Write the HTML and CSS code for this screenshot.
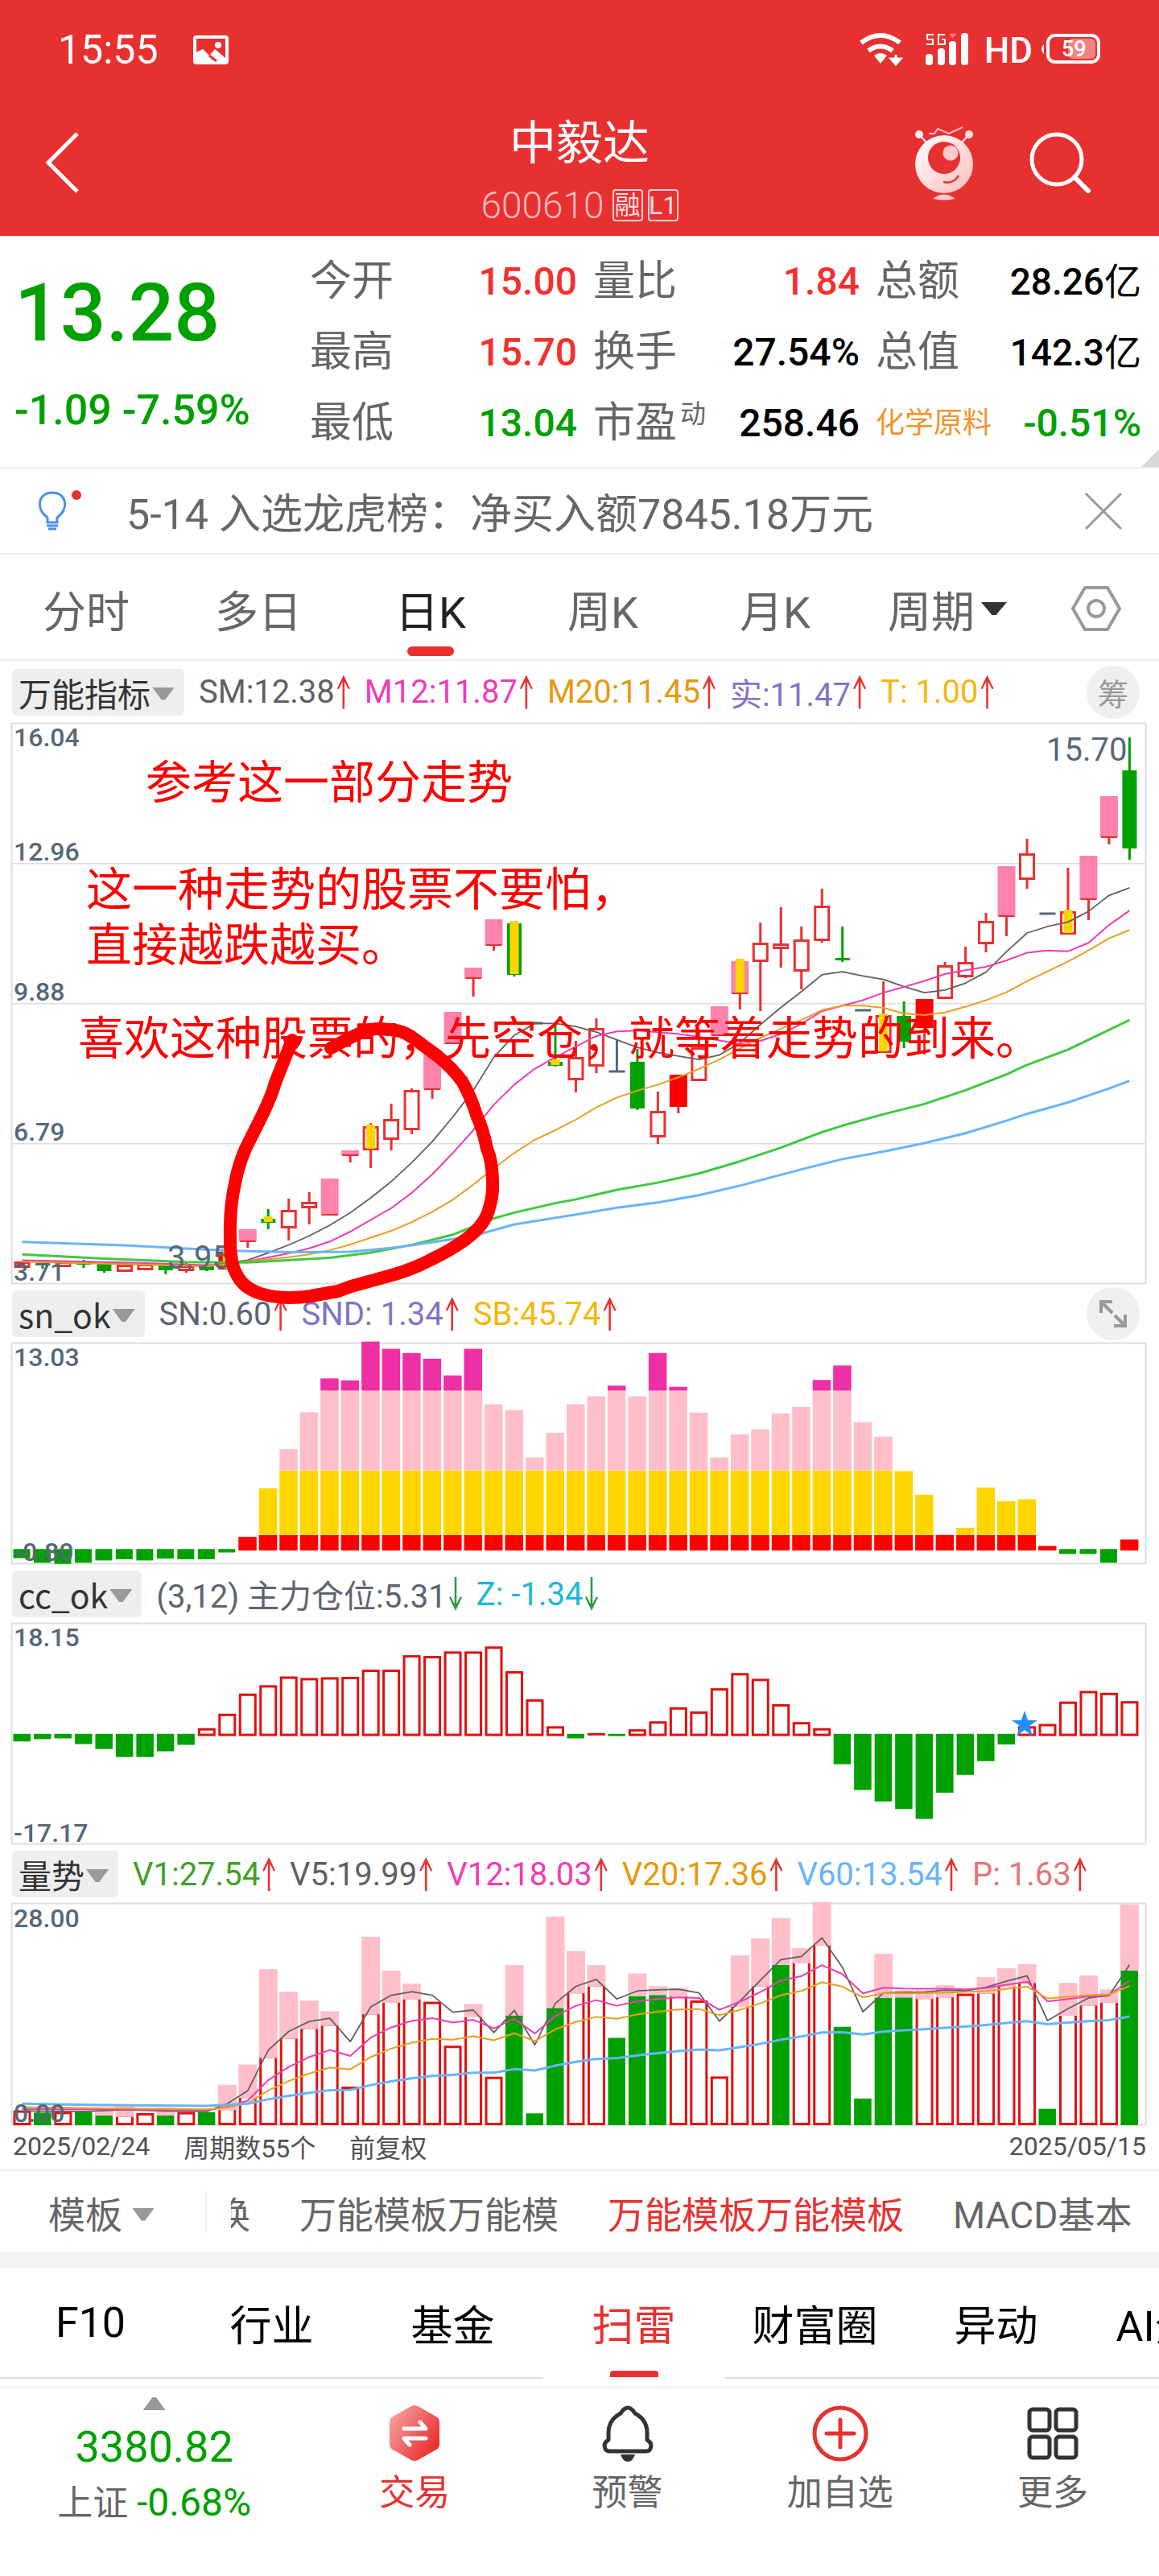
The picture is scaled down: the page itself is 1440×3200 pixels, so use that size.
FILE: index.html
```html
<!DOCTYPE html>
<html lang="zh-CN">
<head>
<meta charset="utf-8">
<meta name="viewport" content="width=device-width, initial-scale=1">
<title>中毅达 600610</title>
<link rel="stylesheet" href="styles.css">
</head>
<body>
<header class="top">
  <div class="status">
    <span class="clock">15:55</span>
    <svg width="44" height="36" viewBox="0 0 44 36" aria-hidden="true"><rect width="44" height="36" rx="4" fill="#fff"/><path d="M4 4h36v24L27 17l-7 8-8-8-8 4z" fill="#e73131"/><circle cx="31" cy="12" r="4" fill="#fff"/><path d="M20 25l9 7" stroke="#e73131" stroke-width="3"/></svg>
    <svg class="status-icons" width="300" height="44" viewBox="0 0 300 44" aria-hidden="true">
      <g fill="none" stroke="#fff" stroke-width="6"><path d="M2 13q24-18 48 0"/><path d="M11 23q15-11 30 0"/></g>
      <path d="M18 29q8-6 16 0l-8 10z" fill="#fff"/><path d="M45 28v8M39 33h12l-6 7z" stroke="#fff" stroke-width="3" fill="#fff"/>
      <g fill="none" stroke="#fff" stroke-width="2"><path d="M92 3h-8v6h7v6h-8M106 3h-8v12h8v-6h-4"/></g>
      <path d="M111 2h9l-4 6z" fill="#f47a7a"/>
      <g fill="#fff"><rect x="82" y="27" width="9" height="14" rx="4"/><rect x="97" y="20" width="9" height="21" rx="4"/><rect x="111" y="11" width="9" height="30" rx="4"/><rect x="126" y="1" width="9" height="40" rx="4"/></g>
      <text x="155" y="38" class="hd">HD</text>
      <rect x="234" y="4" width="63" height="33" rx="9" fill="none" stroke="#fff" stroke-width="4"/>
      <rect x="259" y="8" width="34" height="25" rx="6" fill="#f28484"/>
      <path d="M229 15v12q-6-6 0-12" fill="#fff"/>
      <text x="251" y="30" class="bat">59</text>
    </svg>
  </div>
  <div class="titlebar">
    <button class="icon-btn back" aria-label="返回"><svg width="44" height="78" viewBox="0 0 44 78"><path d="M40 3L4 39l36 36" fill="none" stroke="#fff" stroke-width="5"/></svg></button>
    <div class="title">
      <h1>中毅达</h1>
      <p><span>600610</span><b>融</b><b>L1</b></p>
    </div>
    <div class="actions">
      <button class="icon-btn" aria-label="智能助手"><svg width="76" height="94" viewBox="0 0 76 94">
        <defs><linearGradient id="m" x1="0" y1="0" x2="1" y2="1"><stop offset="0" stop-color="#fff"/><stop offset="1" stop-color="#fbb"/></linearGradient></defs>
        <path d="M7 12l9 10M69 12l-9 10" stroke="#fde" stroke-width="2.5"/><circle cx="7" cy="12" r="5" fill="#fff0f0"/><circle cx="69" cy="12" r="5" fill="#fdd"/>
        <path d="M19 11h7l4-6 14 6 17-8" fill="none" stroke="#fbb" stroke-width="2"/>
        <circle cx="38" cy="49" r="36" fill="url(#m)"/><circle cx="38" cy="41" r="20" fill="#e73131"/><circle cx="46" cy="35" r="9.5" fill="#fcc"/>
        <path d="M37 71q13 3 19-8" fill="none" stroke="#e73131" stroke-width="2.5"/><path d="M24 92q14-11 28 0-14 3-28 0" fill="#fbc4c4"/></svg></button>
      <button class="icon-btn" aria-label="搜索"><svg width="78" height="80" viewBox="0 0 78 80"><circle cx="35" cy="36" r="31" fill="none" stroke="#fff" stroke-width="5"/><path d="M57 58l17 17" stroke="#fff" stroke-width="6" stroke-linecap="round"/></svg></button>
    </div>
  </div>
</header>

<main>
<section class="quote">
  <div class="last"><strong>13.28</strong><span>-1.09 -7.59%</span></div>
  <dl>
    <div><dt>今开</dt><dd class="up">15.00</dd></div>
    <div><dt>量比</dt><dd class="up">1.84</dd></div>
    <div><dt>总额</dt><dd class="sm">28.26<i>亿</i></dd></div>
    <div><dt>最高</dt><dd class="up">15.70</dd></div>
    <div><dt>换手</dt><dd>27.54%</dd></div>
    <div><dt>总值</dt><dd class="sm">142.3<i>亿</i></dd></div>
    <div><dt>最低</dt><dd class="down">13.04</dd></div>
    <div><dt>市盈<sup>动</sup></dt><dd>258.46</dd></div>
    <div><dt class="sector">化学原料</dt><dd class="down">-0.51%</dd></div>
  </dl>
</section>

<section class="news">
  <svg width="60" height="60" viewBox="0 0 60 60" aria-hidden="true"><path d="M14 44v-6C-2 26 3 7 20 7s22 19 6 31v6zM13 48h14M15 52h10" fill="none" stroke="#4a90e8" stroke-width="3"/><circle cx="50" cy="10" r="6" fill="#e73131"/></svg>
  <p>5-14 入选龙虎榜：净买入额7845.18万元</p>
  <button class="icon-btn" aria-label="关闭"><svg width="48" height="48" viewBox="0 0 48 48"><path d="M2 2l44 44M46 2L2 46" stroke="#999" stroke-width="3"/></svg></button>
</section>

<nav class="periods">
  <button>分时</button><button>多日</button><button class="on">日K</button><button>周K</button><button>月K</button>
  <button>周期<i class="tri dark"></i></button>
  <button aria-label="设置"><svg width="64" height="58" viewBox="0 0 64 58"><path d="M18 3h28l15 26-15 26H18L3 29z" fill="none" stroke="#999" stroke-width="4" stroke-linejoin="round"/><circle cx="32" cy="29" r="10" fill="none" stroke="#999" stroke-width="4"/></svg></button>
</nav>

<section class="panel annotated">
  <div class="legend first">
    <button class="pick">万能指标<i class="tri"></i></button>
    <span class="gray">SM:12.38<i class="arr"></i></span><span class="mag">M12:11.87<i class="arr"></i></span><span class="org">M20:11.45<i class="arr"></i></span><span class="pur">实:11.47<i class="arr"></i></span><span class="yel">T: 1.00<i class="arr"></i></span>
    <button class="round">筹</button>
  </div>
  <svg id="kline" class="chart" viewBox="0 0 1440 698" role="img" aria-label="日K线图"></svg>
</section>

<section class="panel">
  <div class="legend">
    <button class="pick">sn_ok<i class="tri"></i></button>
    <span class="slate">SN:0.60<i class="arr"></i></span><span class="pur">SND: 1.34<i class="arr"></i></span><span class="yel">SB:45.74<i class="arr"></i></span>
    <button class="round" aria-label="展开"><svg width="34" height="34" viewBox="0 0 34 34"><path d="M2 16V2h14M3 3l13 13M32 18v14H18M31 31L19 19" fill="none" stroke="#999" stroke-width="4"/></svg></button>
  </div>
  <svg id="sn" class="chart" viewBox="0 0 1440 276" role="img" aria-label="sn_ok"></svg>
</section>

<section class="panel">
  <div class="legend">
    <button class="pick">cc_ok<i class="tri"></i></button>
    <span class="slate">(3,12) 主力仓位:5.31<i class="arr dn"></i></span><span class="cyan">Z: -1.34<i class="arr dn"></i></span>
  </div>
  <svg id="cc" class="chart" viewBox="0 0 1440 276" role="img" aria-label="cc_ok"></svg>
</section>

<section class="panel">
  <div class="legend">
    <button class="pick">量势<i class="tri"></i></button>
    <span class="grn">V1:27.54<i class="arr"></i></span><span class="gray">V5:19.99<i class="arr"></i></span><span class="mag">V12:18.03<i class="arr"></i></span><span class="org">V20:17.36<i class="arr"></i></span><span class="blu">V60:13.54<i class="arr"></i></span><span class="pnk">P: 1.63<i class="arr"></i></span>
  </div>
  <svg id="vol" class="chart" viewBox="0 0 1440 277" role="img" aria-label="量势"></svg>
  <div class="dates"><span>2025/02/24</span><span>周期数55个</span><span>前复权</span><span>2025/05/15</span></div>
</section>

<nav class="templates">
  <button class="tpl">模板<i class="tri"></i></button>
  <div class="strip"><a href="#t1" class="cut"><span>换</span></a><a href="#t2">万能模板万能模</a><a href="#t3" class="on">万能模板万能模板</a><a href="#t4">MACD基本</a></div>
</nav>

<nav class="sections">
  <a href="#f10">F10</a><a href="#hy">行业</a><a href="#jj">基金</a><a href="#sl" class="on">扫雷</a><a href="#cf">财富圈</a><a href="#yd">异动</a><a href="#ai">AI分析</a>
</nav>
</main>

<footer class="bar">
  <button class="index"><i class="tri upw"></i><strong>3380.82</strong><span>上证 <em>-0.68%</em></span></button>
  <button class="red"><svg width="72" height="72" viewBox="0 0 72 72"><defs><linearGradient id="h" x1="0" y1="0.2" x2="1" y2="0.9"><stop offset="0" stop-color="#f6a0a0"/><stop offset="1" stop-color="#e82020"/></linearGradient></defs><path d="M32 2q4-2 8 0l23 13q4 2 4 7v27q0 5-4 7L40 69q-4 2-8 0L9 56q-4-2-4-7V22q0-5 4-7z" fill="url(#h)"/><path d="M23 30h27l-7-8M50 42H23l7 8" fill="none" stroke="#fff" stroke-width="5" stroke-linecap="round" stroke-linejoin="round"/></svg>交易</button>
  <button><svg width="72" height="72" viewBox="0 0 72 72"><path d="M27 11q9-14 18 0 15 8 15 24v9q7 4 4 11-1 3-6 3H14q-5 0-6-3-3-7 4-11v-9q0-16 15-24z" fill="none" stroke="#333" stroke-width="5" stroke-linejoin="round"/><path d="M27 62h18q-3 9-9 9t-9-9" fill="#333"/></svg>预警</button>
  <button><svg width="72" height="72" viewBox="0 0 72 72"><circle cx="36" cy="36" r="32" fill="none" stroke="#e73131" stroke-width="5"/><path d="M36 19v34M19 36h34" stroke="#e73131" stroke-width="5" stroke-linecap="round"/></svg>加自选</button>
  <button><svg width="72" height="72" viewBox="0 0 72 72"><g fill="none" stroke="#333" stroke-width="5"><rect x="7" y="6" width="25" height="26" rx="4"/><rect x="40" y="6" width="25" height="26" rx="4"/><rect x="7" y="40" width="25" height="26" rx="4"/><rect x="40" y="40" width="25" height="26" rx="4"/></g></svg>更多</button>
</footer>
<script src="charts.js"></script>
</body>
</html>
```
FILE: styles.css
```css
* { box-sizing: border-box; }
body {
  margin: 0;
  background: #fff;
  color: #000;
  font-family: Roboto, "Noto Sans CJK SC", sans-serif;
  overflow-x: hidden;
}
button {
  border: 0;
  padding: 0;
  background: none;
  color: inherit;
  font: inherit;
}
a { color: inherit; text-decoration: none; }
svg { display: block; }
h1, p, dl, dd { margin: 0; }

.top { background: #e73131; color: #fff; height: 293px; }
.status { display: flex; align-items: center; height: 124px; padding: 0 72px; }
.clock { font-size: 50px; width: 168px; }
.status-icons { margin-left: auto; }
.hd { font: 500 44px "Liberation Sans Narrow", Roboto, sans-serif; fill: #fff; }
.bat { font: 500 27px Roboto, sans-serif; fill: #fff; }
.titlebar { display: grid; grid-template-columns: 1fr auto 1fr; height: 169px; padding: 0 56px; }
.back { justify-self: start; height: 156px; }
.title { text-align: center; }
.title h1 { font-size: 58px; font-weight: 400; line-height: 88px; padding-top: 10px; }
.title p { display: flex; gap: 6px; justify-content: center; align-items: center; height: 72px; padding-bottom: 6px; }
.title p span { font-size: 46px; font-weight: 300; color: #fbb; margin-right: 4px; }
.title b { border: 2px solid #fcc; border-radius: 4px; width: 38px; height: 40px; font-size: 32px; font-weight: 400; line-height: 36px; display: flex; justify-content: center; color: #fdd; }
.actions { justify-self: end; display: flex; gap: 67px; align-items: center; height: 156px; padding-right: 28px; }
.title, .actions, .back { align-self: start; }

.quote { position: relative; display: grid; grid-template-columns: 385fr 1055fr; padding: 13px 0 10px; border-bottom: 2px solid #eee; }
.quote::after { content: ""; position: absolute; right: 0; bottom: 0; width: 22px; height: 22px; background: #d8d8d8; clip-path: polygon(100% 0, 100% 100%, 0 100%); }
.last { padding-left: 18px; color: #00a000; display: flex; flex-direction: column; font-weight: 500; }
.last strong { font-size: 100px; font-weight: 500; line-height: 166px; }
.last span { font-size: 52px; line-height: 76px; white-space: nowrap; }
.quote dl { display: grid; grid-template-columns: 332fr 331fr 330fr; column-gap: 20px; padding-right: 22px; }
.quote dl div { display: flex; justify-content: space-between; align-items: center; height: 88px; white-space: nowrap; }
.quote dt { font-size: 52px; color: #666; line-height: 88px; }
.quote dt sup { font-size: 32px; line-height: 32px; margin-left: 4px; }
.quote dt.sector { font-size: 36px; color: #f5912c; }
.quote dd { font-size: 48px; font-weight: 500; line-height: 88px; }
.quote dd.sm { font-size: 46px; }
.quote dd i { font-style: normal; font-weight: 400; }
.up { color: #f33030; }
.down { color: #00a000; }

.news { display: flex; align-items: center; height: 107px; padding: 0 45px; border-bottom: 2px solid #eee; color: #666; }
.news p { font-size: 52px; margin-left: 52px; flex: 1; white-space: nowrap; }

.periods { display: grid; grid-template-columns: repeat(6, 214fr) 156fr; height: 132px; border-bottom: 2px solid #eee; font-size: 54px; color: #666; }
.periods button { position: relative; display: flex; align-items: center; justify-content: center; white-space: nowrap; padding-top: 4px; }
.periods .on { color: #222; }
.periods .on::after { content: ""; position: absolute; bottom: 4px; width: 58px; height: 12px; border-radius: 6px; background: #e73131; }

.tri { flex: none; width: 28px; height: 16px; margin-left: 2px; background: #999; clip-path: polygon(0 0, 100% 0, 58% 100%, 42% 100%); }
.tri.dark { width: 32px; background: #333; margin-left: 8px; }
.tri.upw { clip-path: polygon(42% 0, 58% 0, 100% 100%, 0 100%); margin: 0; }

.legend { display: flex; align-items: center; height: 72px; padding: 0 24px 0 15px; font-size: 40px; white-space: nowrap; gap: 18px; position: relative; }
.legend.first { height: 77px; }
.pick { display: flex; align-items: center; height: 58px; padding: 0 12px 0 8px; background: #eee; border-radius: 6px; color: #333; font-size: 41px; line-height: 54px; font-family: "Noto Sans CJK SC", sans-serif; }
.pick .tri { margin-top: 4px; }
.legend > span { display: flex; align-items: center; }
.arr { width: 16px; height: 42px; margin-left: 3px; background: #e73131; clip-path: polygon(50% 0, 100% 40%, 88% 42%, 58% 20%, 58% 100%, 42% 100%, 42% 20%, 12% 42%, 0 40%); }
.arr.dn { background: #2a9a40; transform: rotate(180deg); }
.round { margin-left: auto; width: 66px; height: 66px; border-radius: 33px; background: #efefef; color: #999; font-size: 38px; display: flex; align-items: center; justify-content: center; }
.gray { color: #606060; } .slate { color: #5c6470; } .mag { color: #f03cb4; } .org { color: #e8990c; }
.pur { color: #7f74c8; } .yel { color: #f4b80c; } .cyan { color: #1cb8d8; } .grn { color: #40a028; }
.blu { color: #68b4fc; } .pnk { color: #e07878; }

.chart { width: 100%; height: auto; overflow: visible; }
.annotated .chart { position: relative; z-index: 1; pointer-events: none; }
.tick { font: 500 32px Roboto, sans-serif; fill: #54687a; }
.mark { font: 40px Roboto, sans-serif; fill: #54687a; }
.note { font: 57px "Noto Sans CJK SC", sans-serif; fill: #f00; }
.dates { display: flex; align-items: center; gap: 42px; height: 54px; padding: 0 16px 4px; font-size: 32px; color: #505050; }
.dates span:last-child { margin-left: auto; }

.templates { display: flex; align-items: center; height: 123px; border-top: 2px solid #eee; border-bottom: 20px solid #f3f3f3; color: #666; font-size: 46px; white-space: nowrap; }
.tpl { display: flex; align-items: center; width: 257px; height: 52px; padding-left: 60px; border-right: 2px solid #eee; }
.tpl .tri { margin: 6px 0 0 12px; }
.strip { display: flex; gap: 61px; flex: 1; overflow: hidden; padding-left: 30px; }
.cut { width: 24px; overflow: hidden; display: flex; justify-content: flex-end; }
.templates .on { color: #e73131; }

.sections { display: grid; grid-template-columns: repeat(7, 15.625%); height: 137px; overflow: hidden; font-size: 52px; }
.sections a { display: flex; align-items: center; justify-content: center; border-bottom: 2px solid #ddd; position: relative; white-space: nowrap; }
.sections .on { color: #e73131; border-color: #fff; }
.sections .on::after { content: ""; position: absolute; bottom: 0; width: 60px; height: 8px; border-radius: 4px 4px 0 0; background: #e73131; }

.bar { display: grid; grid-template-columns: 383fr repeat(4, 264fr); border-top: 3px solid #f3f3f3; margin-top: 9px; padding: 11px 0 70px; }
.bar button { display: flex; flex-direction: column; align-items: center; padding-top: 9px; font-size: 44px; line-height: 76px; color: #666; }
.bar .red { color: #e73131; }
.bar .index { padding: 0; }
.index strong { font-size: 54px; font-weight: 400; color: #00a000; line-height: 92px; }
.index span { line-height: 46px; white-space: nowrap; }
.index em { font-style: normal; color: #00a000; font-size: 48px; }
```
FILE: charts.js
```js
const FIRST_X = 27.5, STEP = 25.48, LEFT = 14, RIGHT = 1424;
const RED = '#e73131', PURE = '#e01010', GREEN = '#00a000', PINK = '#ff82aa', SOFT = '#ffbfca', GOLD = '#ffd500';
const cx = i => FIRST_X + STEP * i;
const rect = (x, y, w, h, fill, extra = '') => `<rect x="${x}" y="${y}" width="${w}" height="${Math.max(h, 0)}" fill="${fill}" ${extra}/>`;
const hollow = (x, y, w, h, c) => rect(x + 1.5, y + 1.5, w - 3, h - 3, '#fff', `stroke="${c}" stroke-width="3"`);
const vline = (x, a, b, c) => rect(x - 1.5, a, 3, b - a, c);
const text = (x, y, s, cls) => `<text x="${x}" y="${y}" class="${cls}">${s}</text>`;
const frame = h => `<rect x="${LEFT}.5" y=".5" width="${RIGHT - LEFT - 1}" height="${h - 2}" fill="none" stroke="#ddd" stroke-width="2"/>`;
const curve = (pts, sy, c, w) => `<polyline fill="none" stroke="${c}" stroke-width="${w}" stroke-linejoin="round" points="${pts.map(([i, v]) => cx(i) + ',' + sy(v)).join(' ')}"/>`;
const series = (start, values) => values.map((v, k) => [start + k, v]);

/* Daily candles: type, high, body top, body bottom, low */
const candles = [
['r',670,670,676,676],['g',669,671,674,678],['r',670,670,675,675],['g',667,670,673,677],['g',672,672,681,683],['r',674,674,681,681],['r',672,673,679,680],['g',673,673,680,685],['r',671,675,680,683],['g',674,674,680,681],
['Ry',657,657,679,679],['p',629,629,644,652],['gy',604,616,621,629],['r',591,606,627,643],['r',583,596,602,623],['p',566,566,611,612],['p',531,531,537,546],['ry',497,502,530,553],['r',473,493,517,531],['r',454,457,505,511],
['p',411,411,455,467],['p',359,359,398,399],['p',304,304,317,340],['p',244,244,276,283],['gy',249,249,313,315],['d',373,373,373,373],['gy',372,421,426,427],['r',395,416,443,459],['r',367,380,426,435],['d',394,433,433,433],
['g',405,421,479,481],['r',458,483,514,523],['R',437,437,477,485],['r',383,404,444,444],['p',352,352,388,389],['py',296,296,336,356],['r',248,274,296,358],['r',229,275,280,304],['r',253,270,308,331],['r',206,228,270,273],
['g',253,292,295,297],['d',357,357,357,357],['ry',321,364,409,410],['g',346,364,396,404],['R',343,343,379,412],['r',297,302,342,343],['r',278,298,315,317],['r',236,247,274,285],['p',178,178,240,265],['r',144,163,194,206],
['d',237,237,237,237],['ry',180,235,262,263],['p',165,165,219,245],['p',91,91,142,151],['g',18,59,156,170]];

function drawKline() {
  const sy = v => (v - 38) * 0.472;
  let s = frame(698);
  for (const y of [174, 348, 522]) s += rect(LEFT, y, RIGHT - LEFT, 1.5, '#ddd');
  candles.forEach(([t, hi, a, b, lo], i) => {
    const x = cx(i);
    if (t === 'd') {
      s += rect(x - 10, a - 1.5, 20, 3, '#54687a') + vline(x, hi, a, '#54687a');
      return;
    }
    s += vline(x, hi, lo, t[0] === 'g' ? GREEN : RED);
    if (t[0] === 'r') s += hollow(x - 10, a - 1, 20, Math.max(b - a + 2, 6), RED);
    if (t[0] === 'g') s += rect(x - 9, a, 18, b - a, GREEN);
    if (t[0] === 'p') s += rect(x - 11, a, 22, b - a, PINK) + rect(x - 10, b - 1, 20, 2, RED);
    if (t[0] === 'R') s += rect(x - 11, a, 22, b - a, '#f00');
    if (t[1] === 'y') s += rect(x - 5.5, a - 3, 11, b - a + 2, GOLD);
  });
  s += curve([[0,1455],[5,1462],[9,1468],...series(11,[1452,1433,1412,1388,1360,1327,1288,1245,1195,1140,1075,1005,918,860,829,829,837,852,872,892,906,915,924,912,880,832,787,745,701,693,704,713,732,748,741,723,694,640,591,574,562,534,492,472])], sy, '#606060', 1.8);
  s += curve([[0,1452],[5,1458],...series(9,[1465,1463,1455,1445,1434,1421,1403,1377,1346,1315,1275,1226,1170,1110,1043,990,948,918,890,862,850,848,852,857,864,874,882,875,857,830,797,782,768,748,733,717,699,689,680,663,643,637,639,617,570,532])], sy, '#f03cb4', 2);
  s += curve([[0,1456],...series(9,[1468,1463,1455,1450,1444,1437,1426,1411,1393,1375,1352,1325,1293,1253,1210,1170,1135,1110,1082,1050,1024,1006,990,971,949,924,895,867,843,820,794,782,782,788,803,807,800,785,768,747,718,692,666,637,605,583])], sy, '#e8a020', 2);
  s += curve([[0,1437],[4,1448],[8,1457],[11,1458],[15,1446],[17,1432],[19,1412],[21,1385],[23,1342],[24,1327],[26,1302],[27,1292],[29,1267],[31,1248],[33,1224],[35,1192],[37,1156],[39,1115],[40,1098],[42,1068],[44,1041],[46,1005],[48,963],[49,938],[51,898],[53,846],[54,820]], sy, '#40c840', 3);
  s += curve([[0,1404],[5,1413],[10,1427],[13,1431],[16,1430],[18,1420],[20,1405],[22,1388],[24,1358],[27,1332],[29,1314],[31,1300],[33,1281],[35,1256],[38,1213],[40,1186],[42,1166],[44,1144],[46,1118],[48,1085],[49,1067],[51,1037],[53,1000],[54,980]], sy, '#68b4f8', 3);
  s += text(17, 29, '16.04', 'tick') + text(17, 171, '12.96', 'tick') + text(17, 345, '9.88', 'tick') + text(17, 519, '6.79', 'tick') + text(17, 693, '3.71', 'tick');
  s += text(208, 678, '3.95', 'mark') + text(1300, 47, '15.70', 'mark');
  s += text(181, 94, '参考这一部分走势', 'note') + text(107, 227, '这一种走势的股票不要怕，', 'note') + text(107, 296, '直接越跌越买。', 'note') + text(97, 412, '喜欢这种股票的，先空仓，就等着走势的到来。', 'note');
  s += '<path transform="translate(0 -898)" d="M363 1292L342 1345Q338 1360 326 1385L305 1427Q296 1448 292 1470Q285 1500 286 1540Q286 1570 294 1583Q302 1600 324 1607Q350 1615 386 1610L420 1604L436 1598L487 1584Q515 1576 537 1564Q560 1553 578 1540Q604 1521 608 1500Q613 1485 612 1465Q611 1440 605 1427Q600 1402 592 1385Q585 1362 574 1343Q563 1328 544 1312L514 1290Q500 1279 482 1279Q465 1276 450 1282Q430 1291 411 1302" fill="none" stroke="#f00" stroke-width="16" stroke-linecap="round" stroke-linejoin="round"/>';
  document.getElementById('kline').innerHTML = s;
}

/* Stacked bars: negative entries hang below the zero line */
function drawSn() {
  const data = [-733,-745,-748,-745,-739,-736,-739,-734,-736,-736,-718,677,549,446,349,260,265,163,182,193,208,252,182,328,343,468,403,328,307,279,307,193,282,350,468,407,394,352,335,264,226,375,413,504,566,672,653,547,583,578,701,-722,-722,-745,684];
  const sy = v => (v - 166) / 2.119;
  let s = frame(276);
  data.forEach((v, i) => {
    const x = cx(i) - 11.5;
    if (v < 0) { s += rect(x + .5, sy(709), 21, sy(-v) - sy(709), GREEN); return; }
    const band = (from, to, c) => { const t = Math.max(sy(v), sy(to)); if (t < sy(from)) s += rect(x, t, 22.5, sy(from) - t, c); };
    band(713, 672, '#f00'); band(672, 502, GOLD); band(502, 292, SOFT); band(292, 0, '#ef2fa6');
  });
  s += text(17, 29, '13.03', 'tick') + text(17, 271, '-0.80', 'tick');
  document.getElementById('sn').innerHTML = s;
}

function drawCc() {
  const data = [-1217,-1211,-1209,-1224,-1237,-1258,-1258,-1243,-1226,1182,1144,1091,1069,1046,1050,1048,1047,1028,1028,990,992,980,980,967,1032,1106,1177,-1209,1195,-1203,1185,1164,1127,1138,1077,1037,1052,1119,1166,1182,-1277,-1345,-1375,-1395,-1421,-1352,-1305,-1269,-1225,1177,1171,1112,1084,1089,1111];
  const sy = v => (v - 905) / 2.119;
  let s = frame(276);
  data.forEach((v, i) => {
    const x = cx(i) - 11;
    if (v < 0) s += rect(x, sy(1197), 21.5, sy(-v) - sy(1197), GREEN);
    else if (v > 1190) s += rect(x, sy(1195), 22, 3, PURE);
    else s += hollow(x, sy(v), 22, sy(1203) - sy(v), PURE);
  });
  s += '<path d="M1273 109l4 12h12l-10 7 4 13-10-8-10 8 4-13-10-7h12z" fill="#1e90ff"/>';
  s += text(17, 29, '18.15', 'tick') + text(17, 272, '-17.17', 'tick');
  document.getElementById('cc').innerHTML = s;
}

/* Turnover bars: colour, bar top, top of the soft cap */
function drawVol() {
  const data = ['r995','g1003','r1000','g1000','g1014,985','r1010,980','r1005','g1014,985','r1001','g1001','r985,900','r940,825','r792,471','r720,555','r684,588','r672,627','r907','r630,351','r587,477','r575,525','r592','r755','r641,600','r870','g643,456','g1006','g615,276','r552,404','r527,456','g726','g571,487','g567,534','r564,540','r587','r869','r602,420','r527,357','g455,282','r441,393','r375,222','g685','g951','g578,414','g576,549','r573,549','r567,531','r562','r553,501','r528,468','r514,453','g989','r635,522','r597,495','r587,546','g476,231'];
  const sy = v => (v - 226) / 2.985, base = sy(1050);
  let s = frame(277);
  data.forEach((d, i) => {
    const [top, cap] = d.slice(1).split(',').map(Number), x = cx(i) - 11, y = sy(top);
    s += d[0] === 'g' ? rect(x, y, 21.5, base - y, GREEN) : hollow(x, y, 22, base - y, PURE);
    if (cap) s += rect(x - .5, sy(cap), 23, y - sy(cap) + (d[0] === 'r' ? 3 : 0), SOFT);
  });
  s += curve([[0,997],[3,999],[5,993],[7,997],...series(9,[999,970,922,772,702,665,653,740,611,568,555,568,631,623,706,624,752,598,535,509,582,552,548,546,559,664,590,512,436,424,355,465,629,559,557,556,549,552,538,516,496,662,618,578,569,455])], sy, '#606060', 1.8);
  s += curve([[0,990],[5,992],...series(9,[995,982,959,883,834,797,771,793,725,687,663,653,669,659,691,655,710,645,607,586,607,590,582,576,578,622,592,556,514,497,456,490,561,540,543,544,544,546,541,529,518,591,582,572,567,514])], sy, '#f03cb4', 2);
  s += curve([[0,983],[5,988],...series(9,[991,984,968,921,886,858,836,843,797,766,744,730,733,720,735,709,738,694,667,648,655,639,629,621,619,642,622,598,568,552,520,536,576,560,561,560,558,556,552,545,536,580,574,568,565,534])], sy, '#e8a020', 2);
  s += curve([[0,970],[4,975],[9,978],...series(11,[970,954,941,930,920,919,901,887,876,867,863,855,855,842,847,829,815,804,801,791,783,775,769,772,760,748,733,721,706,705,713,703,698,694,689,684,678,671,664,675,669,664,660,647])], sy, '#68b4f8', 3);
  s += text(17, 30, '28.00', 'tick') + text(17, 272, '0.00', 'tick');
  document.getElementById('vol').innerHTML = s;
}

drawKline();
drawSn();
drawCc();
drawVol();
```
